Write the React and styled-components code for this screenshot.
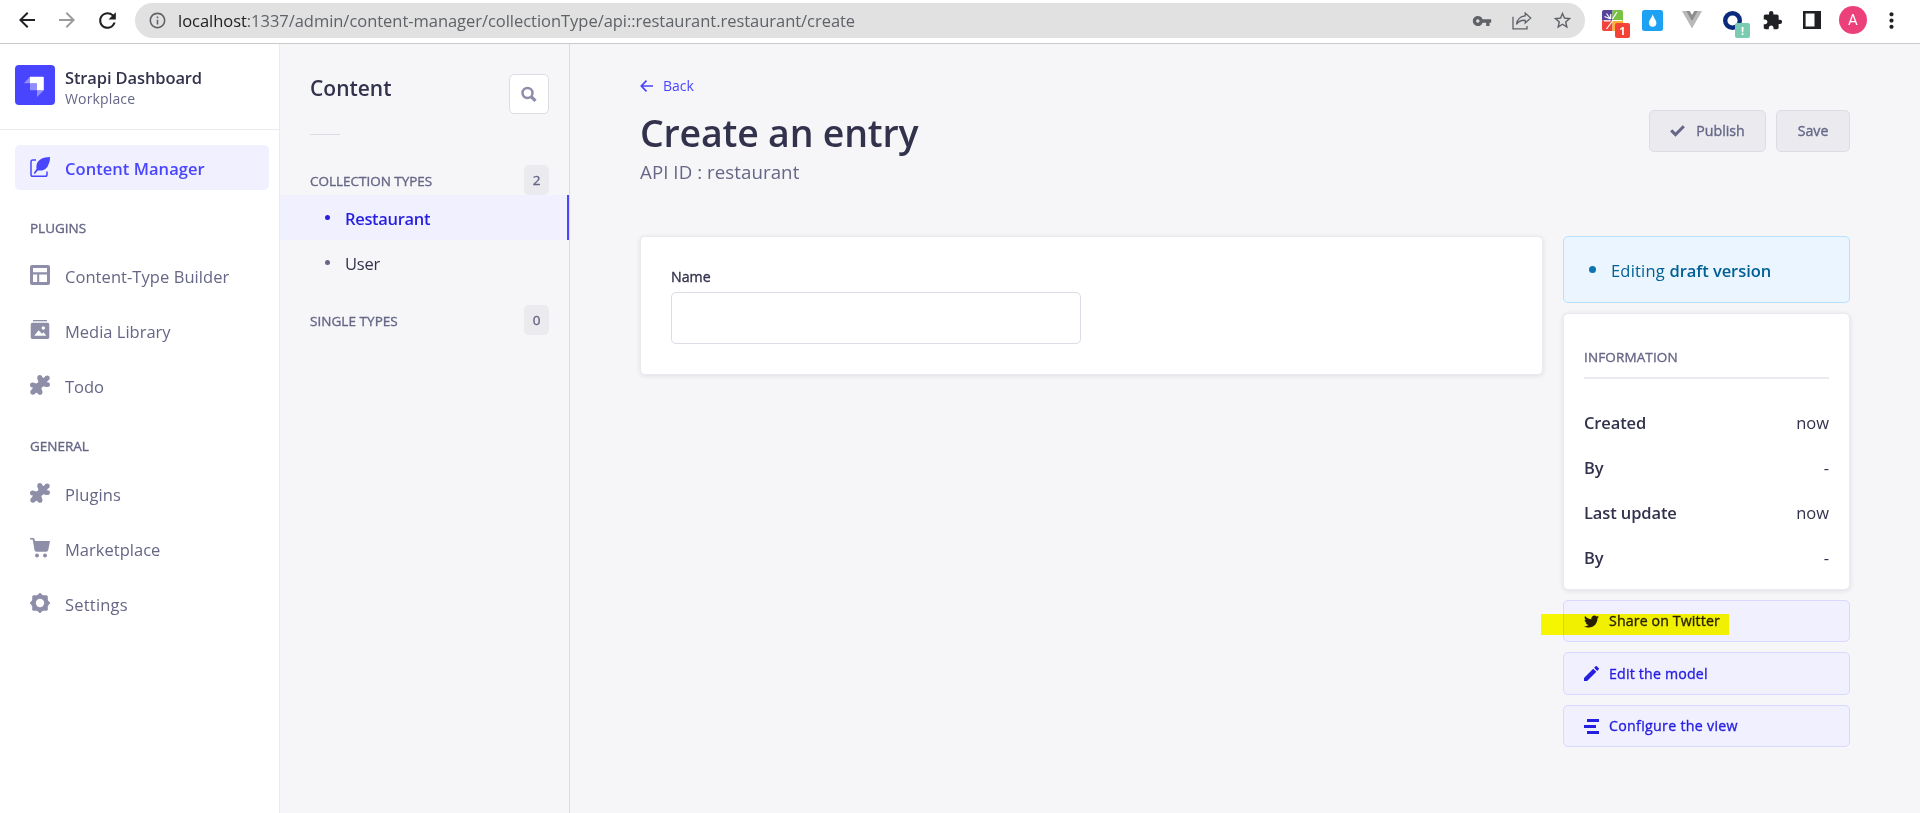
import React from 'react';
import styled, { createGlobalStyle, css } from 'styled-components';
import { MdArrowBack, MdArrowForward, MdRefresh, MdInfoOutline, MdVpnKey, MdStarBorder, MdExtension, MdMoreVert, MdEdit } from 'react-icons/md';
import { FaTwitter } from 'react-icons/fa';

const GlobalStyle = createGlobalStyle`
  * { box-sizing: border-box; }
  body {
    margin: 0;
    overflow: hidden;
    background: #f6f6f9;
    font-family: "Open Sans", "Noto Sans", sans-serif;
    color: #32324d;
  }
  h1, h2, p, ul { margin: 0; padding: 0; font-weight: inherit; list-style: none; }
  button { font-family: inherit; margin: 0; padding: 0; }
  svg { display: block; flex: none; }
`;

/* ---------- shared text ---------- */
const Text = styled.span`
  display: block;
  white-space: nowrap;
  font-size: ${(p) => p.$size || 16.5}px;
  line-height: ${(p) => p.$line || 24}px;
  font-weight: ${(p) => p.$weight || 400};
  letter-spacing: ${(p) => p.$track || 0}px;
  color: ${(p) => p.$color || 'inherit'};
`;
/* A weight between regular and semibold, for small labels. */
const MediumText = styled(Text)`
  -webkit-text-stroke: 0.35px currentColor;
`;
const Caption = styled(MediumText).attrs((p) => ({ $size: 13.5, $track: p.$track ?? -0.02 }))``;

/* ---------- browser toolbar ---------- */
const Screen = styled.div`
  width: 1920px;
  height: 813px;
  display: flex;
  flex-direction: column;
`;
const Toolbar = styled.header`
  flex: none;
  height: 44px;
  display: flex;
  align-items: flex-start;
  background: #fff;
  border-bottom: 1px solid #c8cacb;
`;
const NavButtons = styled.div`
  width: 135px;
  height: 40px;
  padding-left: 15px;
  display: flex;
  align-items: center;
  gap: 16px;
`;
const AddressBar = styled.div`
  width: 1450px;
  height: 35px;
  margin-top: 3px;
  padding: 0 12px 0 13px;
  display: flex;
  align-items: center;
  border-radius: 18px;
  background: #e1e1e1;
  color: #5f6368;
`;
const Url = styled(Text)`
  flex: 1;
  padding-left: 11px;
  color: #5f6368;
  b { font-weight: 400; color: #202124; }
`;
const AddressActions = styled.div`
  display: flex;
  align-items: center;
  gap: 20px;
`;
const Extensions = styled.div`
  height: 40px;
  padding-left: 17px;
  display: flex;
  align-items: center;
`;
const Extension = styled.div`
  position: relative;
  width: 40px;
  height: 40px;
  flex: none;
  display: flex;
  align-items: center;
  padding-left: ${(p) => p.$inset || 0}px;
`;
const ExtensionBadge = styled.span`
  position: absolute;
  left: 13px;
  top: 23px;
  width: 15px;
  height: 15px;
  border-radius: 2px;
  background: ${(p) => p.$bg};
  color: #fff;
  font: 700 11px/16px "Open Sans", sans-serif;
  text-align: center;
`;
const Avatar = styled.div`
  width: 28px;
  height: 28px;
  flex: none;
  margin: 0 12px 0 -3px;
  border-radius: 50%;
  background: #ec407a;
  color: #fff;
  font: 400 15px/29px Roboto, sans-serif;
  text-align: center;
`;

/* ---------- layout ---------- */
const Body = styled.div`
  flex: 1;
  min-height: 0;
  display: flex;
`;
const Sidebar = styled.nav`
  width: 280px;
  flex: none;
  background: #fff;
  border-right: 1px solid #eaeaef;
`;
const Brand = styled.div`
  height: 86px;
  padding: 21px 15px 0;
  display: flex;
  gap: 10px;
  border-bottom: 1px solid #eaeaef;
`;
const BrandLogo = styled.div`
  width: 40px;
  height: 40px;
  border-radius: 4px;
  background: #4945ff;
`;
const BrandText = styled.div`
  flex: 1;
`;
const NavList = styled.ul`
  padding: 0 10px 0 15px;
  margin-top: ${(p) => p.$top}px;
  display: flex;
  flex-direction: column;
  gap: 10px;
`;
const NavItem = styled.li`
  height: 45px;
  padding-left: 15px;
  display: flex;
  align-items: flex-start;
  gap: 15px;
  border-radius: 5px;
  color: #666687;
  svg { margin-top: 12px; color: #8e8ea9; }
  ${Text} { margin-top: 12px; }
  ${(p) => p.$active && css`
    background: #f0f0ff;
    color: #4945ff;
    svg { color: #4945ff; }
  `}
`;
const GroupCaption = styled(Caption)`
  color: #666687;
  padding-left: 30px;
  margin-top: 28px;
`;

/* ---------- content column ---------- */
const SubNav = styled.nav`
  width: 290px;
  flex: none;
  border-right: 1px solid #dcdce4;
`;
const SubNavHeader = styled.div`
  height: 90px;
  padding: 30px 20px 0 30px;
  display: flex;
  justify-content: space-between;
`;
const SearchButton = styled.button`
  width: 40px;
  height: 40px;
  display: flex;
  align-items: center;
  justify-content: center;
  background: #fff;
  border: 1px solid #dcdce4;
  border-radius: 5px;
  color: #8e8ea9;
`;
const ShortRule = styled.div`
  width: 30px;
  height: 1px;
  margin: 0 0 30px 30px;
  background: #dcdce4;
`;
const TypeHeader = styled.div`
  height: 30px;
  margin-top: ${(p) => p.$top || 0}px;
  padding: 0 20px 0 30px;
  display: flex;
  align-items: flex-end;
  justify-content: space-between;
  color: #666687;
`;
const Count = styled.span`
  width: 25px;
  height: 30px;
  border-radius: 5px;
  background: #eaeaef;
  text-align: center;
  font-size: 13.5px;
  -webkit-text-stroke: 0.35px currentColor;
  line-height: 30px;
`;
const TypeRow = styled.div`
  height: 45px;
  padding: 0 0 0 45px;
  display: flex;
  align-items: center;
  gap: 15px;
  color: #32324d;
  ${Text} { padding-top: 2px; }
  ${(p) => p.$active && css`
    background: #f0f0ff;
    border-right: 2px solid #4945ff;
    color: #271fe0;
  `}
`;
const Dot = styled.i`
  width: ${(p) => p.$size}px;
  height: ${(p) => p.$size}px;
  margin-bottom: ${(p) => p.$lift || 0}px;
  border-radius: 50%;
  background: ${(p) => p.$color};
`;

/* ---------- main ---------- */
const Main = styled.main`
  flex: 1;
  padding: 30px 70px 0;
`;
const BackLink = styled.div`
  height: 24px;
  display: flex;
  align-items: center;
  gap: 10px;
  color: #4945ff;
`;
const TitleRow = styled.div`
  height: 138px;
  display: flex;
  justify-content: space-between;
`;
const TitleBlock = styled.div`
  padding-top: 10px;
`;
const Actions = styled.div`
  display: flex;
  gap: 10px;
  padding-top: 12px;
`;
const ActionButton = styled.button`
  width: ${(p) => p.$width}px;
  height: 42px;
  display: flex;
  align-items: center;
  justify-content: center;
  gap: 11px;
  border: 1px solid #dcdce4;
  border-radius: 5px;
  background: #eaeaef;
  color: #666687;
`;
const Columns = styled.div`
  display: flex;
  align-items: flex-start;
  justify-content: space-between;
`;
const Card = styled.section`
  width: ${(p) => p.$width}px;
  height: ${(p) => p.$height}px;
  padding: ${(p) => p.$pad};
  background: #fff;
  border: 1px solid #eaeaef;
  border-radius: 5px;
  box-shadow: 0 1px 5px rgba(33, 33, 52, 0.1);
`;
const Field = styled.input`
  display: block;
  width: 410px;
  height: 52px;
  margin-top: 3px;
  border: 1px solid #dcdce4;
  border-radius: 5px;
  background: #fff;
  outline: none;
`;
const Aside = styled.aside`
  width: 287px;
  display: flex;
  flex-direction: column;
  gap: 10px;
`;
const Status = styled.div`
  height: 67px;
  padding: 1px 0 0 25px;
  display: flex;
  align-items: center;
  gap: 15px;
  border: 1px solid #b8e1ff;
  border-radius: 5px;
  background: #eaf5ff;
  color: #006096;
  ${Text} { padding-top: 2px; }
  b { font-weight: 600; letter-spacing: -0.05px; }
`;
const InfoRule = styled.hr`
  height: 2px;
  margin: 9px 0 21px;
  border: 0;
  background: #eaeaef;
`;
const InfoRow = styled.div`
  height: 45px;
  display: flex;
  justify-content: space-between;
  align-items: center;
`;
const SideLinks = styled.div`
  display: flex;
  flex-direction: column;
  gap: 10px;
`;
const SideLink = styled.div`
  position: relative;
  height: ${(p) => p.$height || 42}px;
  padding-left: 20px;
  display: flex;
  align-items: center;
  gap: 10px;
  border: 1px solid #d9d8ff;
  border-radius: 5px;
  background: #f0f0ff;
  color: #271fe0;
`;
const Marker = styled.div`
  position: absolute;
  left: -23px;
  top: 13px;
  width: 188px;
  height: 21px;
  background: #ffff00;
  mix-blend-mode: multiply;
`;

/* ---------- icons ---------- */
const Icon20 = ({ children }) => (
  <svg width="20" height="20" viewBox="0 0 20 20" fill="currentColor">{children}</svg>
);
const FeatherIcon = () => (
  <Icon20>
    <path d="M6 3.100H2.700Q1 3.100 1 4.800V17.400Q1 19.200 2.700 19.200H15.200Q17 19.200 17 17.400V14.500" fill="none" stroke="currentColor" strokeWidth="1.500" />
    <path d="M20 0C12.800.1 8.800 2.600 7 6.400c-.8 2-.7 3.800-.4 5.400L3.700 16.200l1.200.8 2.900-3.500c3.300.4 6-.4 7.900-1.800 1.400-1.100 2.100-2.300 2.600-3.900C19.600 5.600 20 3 20 0Z" />
  </Icon20>
);
const LayoutIcon = () => (
  <Icon20><path fillRule="evenodd" d="M2 0h16a2 2 0 0 1 2 2v16a2 2 0 0 1-2 2H2a2 2 0 0 1-2-2V2a2 2 0 0 1 2-2ZM3 3V7.300H17V3H3ZM3 9.500V17H7.200V9.500H3Zm6.200 0V17H17V9.500H9.200Z" /></Icon20>
);
const MediaIcon = () => (
  <Icon20>
    <path d="M3 0h14v1.300H3z" />
    <path fillRule="evenodd" d="M2.500 2.800h15a1.800 1.800 0 0 1 1.800 1.800v12.600a1.800 1.800 0 0 1-1.800 1.800h-15a1.800 1.800 0 0 1-1.800-1.800V4.600a1.800 1.800 0 0 1 1.800-1.800ZM4.300 15.700h12L13.600 12.200 12 13.700 8.600 10.200ZM13.300 6.300a1.700 1.700 0 1 0 0 3.400 1.700 1.700 0 0 0 0-3.400Z" />
  </Icon20>
);
const PuzzleIcon = () => (
  <Icon20>
    <circle cx="9.800" cy="2.500" r="2.500" /><circle cx="17.200" cy="2.900" r="2.500" /><circle cx="17.600" cy="9.700" r="2.400" />
    <circle cx="2.500" cy="10" r="2.500" /><circle cx="2.900" cy="17.100" r="2.600" /><circle cx="10" cy="17.500" r="2.400" />
    <path d="M3 7.700 6.500 8.600 8.500 7 7.300 3.500 10 1 13.600 3 16 1 18.500 4.800 16.900 7 18.800 11 16 12 13.500 11.300 11.300 13 12.500 17 9.500 19.200 6.300 17.700 3 19.200 1.200 15.600 3 12.500 1.500 9Z" />
  </Icon20>
);
const CartIcon = () => (
  <Icon20>
    <path d="M0 0h3.300q.9 0 1.100.8L5 3h15l-1.700 8.800q-.3 1.900-2.200 1.900H6.500q-1.700 0-2-1.700L2.700 1.600H0Z" />
    <circle cx="7" cy="17.500" r="2" /><circle cx="15" cy="17.500" r="2" />
  </Icon20>
);
const CogIcon = () => (
  <svg width="20" height="20" viewBox="0 0 20 20">
    <mask id="cog"><rect width="20" height="20" fill="#fff" /><circle cx="10" cy="10" r="4.200" fill="#000" /></mask>
    <g mask="url(#cog)" fill="currentColor">
      <rect x="2.200" y="2.200" width="15.600" height="15.600" rx="1.500" />
      <rect x="2.600" y="2.600" width="14.800" height="14.800" rx="1" transform="rotate(45 10 10)" />
    </g>
  </svg>
);
const StrapiMark = () => (
  <svg width="40" height="40" viewBox="0 0 40 40" fill="#fff">
    <path d="M15 11.700h13.100q.7 0 .7.700v12.900H22V19q0-.7-.7-.7H15Z" />
    <path opacity=".4" d="M15 11.700v6.600H8.900Z" />
    <path opacity=".4" d="M15 18.300h6.300q.7 0 .7.700v6.300h-6.300q-.7 0-.7-.7Z" />
    <path opacity=".4" d="M22 25.300h6.800L22 32Z" />
  </svg>
);
const SearchIcon = () => (
  <svg width="16" height="16" viewBox="0 0 16 16" fill="none" stroke="currentColor">
    <circle cx="6.500" cy="7" r="5" strokeWidth="2.500" /><path d="m10.200 10.700 4.300 4.200" strokeWidth="3.200" />
  </svg>
);
const CheckIcon = () => (
  <svg width="15" height="12" viewBox="0 0 15 12"><path d="M1.200 5.400 5.500 9.600 13.800 1.300" fill="none" stroke="currentColor" strokeWidth="3" /></svg>
);
const BackArrow = () => (
  <svg width="13" height="12" viewBox="0 0 13 12" fill="none" stroke="currentColor" strokeWidth="1.700"><path d="M13 6H1.500M6.500.7 1.300 6l5.200 5.300" /></svg>
);
const PencilIcon = () => (
  <svg width="15" height="15" viewBox="3 3 18 18" fill="currentColor"><MdEdit x="0" y="0" size={24} /></svg>
);
const LinesIcon = () => (
  <svg width="15" height="15" viewBox="0 0 15 15" fill="currentColor"><path d="M3 0h12v3H3zM0 6h12v3H0zM3 12h12v3H3z" /></svg>
);
const ShareIcon = () => (
  <svg width="20" height="18" viewBox="0 0 20 18" fill="none" stroke="currentColor" strokeWidth="1.300">
    <path d="M1 4.700V16.800H15V14" />
    <path d="M13.200 1 18.700 6 13.200 11V8.300C9.500 8 6.500 9.500 4.500 12.300 5.200 7.500 8 4.400 13.200 3.900Z" />
  </svg>
);
const GridLogo = () => (
  <svg width="21" height="21" viewBox="0 0 21 21">
    <path fill="#57439a" d="M2 0h8.500v10.500H0V2q0-2 2-2Z" /><path fill="#79c142" d="M10.500 0H19q2 0 2 2v8.500H10.500Z" />
    <path fill="#f0443e" d="M0 10.500h10.500V21H2q-2 0-2-2Z" /><path fill="#f9b233" d="M10.500 10.500H21V21H10.500Z" />
    <path stroke="#fff" strokeWidth="1.200" fill="none" d="M2.500 6.500 8.500 9M4.500 3.500 8.500 9M8.700 4v5M15 2l-4.500 7M2 10.800h6.500M10 10.500H20M10.500 11 4.500 19" />
  </svg>
);
const DropLogo = () => (
  <svg width="21" height="21" viewBox="0 0 21 21"><rect width="21" height="21" rx="2.500" fill="#1da1f2" /><path fill="#fff" d="M10.700 4C10.500 7 7 9.800 7 13a3.700 3.700 0 0 0 7.400 0c0-2.500-2.700-5-3.700-9Z" /></svg>
);
const VueLogo = () => (
  <svg width="20" height="18" viewBox="0 0 20 18"><path fill="#b9b9b9" d="M0 0h4l6 10.500L16 0h4L10 17.500Z" /><path fill="#8d8d8d" d="M4 0h3.700L10 4l2.300-4H16L10 10.500Z" /></svg>
);
const RingLogo = () => (
  <svg width="19" height="19" viewBox="0 0 19 19"><circle cx="9.500" cy="9.500" r="7.300" fill="none" stroke="#0a2a7c" strokeWidth="4.400" /></svg>
);
const PanelIcon = () => (
  <svg width="18" height="18" viewBox="0 0 18 18"><path fill="#202124" fillRule="evenodd" d="M0 0h18v18H0ZM2.600 2.600v12.800h8.900V2.600Z" /></svg>
);

/* ---------- data ---------- */
const plugins = [
  { label: 'Content-Type Builder', Icon: LayoutIcon, track: 0.06 },
  { label: 'Media Library', Icon: MediaIcon, track: 0 },
  { label: 'Todo', Icon: PuzzleIcon, track: 0 },
];
const general = [
  { label: 'Plugins', Icon: PuzzleIcon, track: 0.1 },
  { label: 'Marketplace', Icon: CartIcon, track: 0.02 },
  { label: 'Settings', Icon: CogIcon, track: 0.2 },
];
const info = [
  ['Created', 'now'],
  ['By', '-'],
  ['Last update', 'now'],
  ['By', '-'],
];

const NavGroup = ({ items, top }) => (
  <NavList $top={top}>
    {items.map(({ label, Icon, track }) => (
      <NavItem key={label}><Icon /><Text $track={track}>{label}</Text></NavItem>
    ))}
  </NavList>
);

export default function App() {
  return (
    <Screen>
      <GlobalStyle />
      <Toolbar>
        <NavButtons>
          <MdArrowBack size={24} color="#202124" />
          <MdArrowForward size={24} color="#9a9b9d" />
          <MdRefresh size={25} color="#202124" />
        </NavButtons>
        <AddressBar>
          <MdInfoOutline size={19} />
          <Url $track={-0.035}><b>localhost</b>:1337/admin/content-manager/collectionType/api::restaurant.restaurant/create</Url>
          <AddressActions>
            <MdVpnKey size={20} />
            <ShareIcon />
            <MdStarBorder size={21} />
          </AddressActions>
        </AddressBar>
        <Extensions>
          <Extension><GridLogo /><ExtensionBadge $bg="#f44336">1</ExtensionBadge></Extension>
          <Extension><DropLogo /></Extension>
          <Extension><VueLogo /></Extension>
          <Extension $inset={1}><RingLogo /><ExtensionBadge $bg="#7bcbb3">!</ExtensionBadge></Extension>
          <Extension><MdExtension size={21} color="#202124" /></Extension>
          <Extension $inset={1}><PanelIcon /></Extension>
          <Avatar>A</Avatar>
          <MdMoreVert size={25} color="#202124" />
        </Extensions>
      </Toolbar>
      <Body>
        <Sidebar>
          <Brand>
            <BrandLogo><StrapiMark /></BrandLogo>
            <BrandText>
              <Text $weight={600} $line={25} $track={-0.12}>Strapi Dashboard</Text>
              <Text $size={14} $line={18} $track={0.15} $color="#666687">Workplace</Text>
            </BrandText>
          </Brand>
          <NavList $top={15}>
            <NavItem $active><FeatherIcon /><Text $weight={600} $track={0.05}>Content Manager</Text></NavItem>
          </NavList>
          <GroupCaption $line={20}>PLUGINS</GroupCaption>
          <NavGroup items={plugins} top={15} />
          <GroupCaption $line={20}>GENERAL</GroupCaption>
          <NavGroup items={general} top={15} />
        </Sidebar>
        <SubNav>
          <SubNavHeader>
            <Text as="h2" $size={21} $weight={600} $line={28}>Content</Text>
            <SearchButton><SearchIcon /></SearchButton>
          </SubNavHeader>
          <ShortRule />
          <TypeHeader><Caption $line={27}>COLLECTION TYPES</Caption><Count>2</Count></TypeHeader>
          <TypeRow $active><Dot $size={5} $color="#271fe0" /><Text $weight={600} $track={-0.32}>Restaurant</Text></TypeRow>
          <TypeRow><Dot $size={5} $color="#666687" /><Text $track={-0.2}>User</Text></TypeRow>
          <TypeHeader $top={20}><Caption $line={27} $track={0.05}>SINGLE TYPES</Caption><Count>0</Count></TypeHeader>
        </SubNav>
        <Main>
          <BackLink><BackArrow /><Text $size={14}>Back</Text></BackLink>
          <TitleRow>
            <TitleBlock>
              <Text as="h1" $size={37.5} $weight={600} $line={50} $track={-0.2}>Create an entry</Text>
              <Text as="p" $size={18.7} $line={27} $track={0.06} $color="#666687">API ID : restaurant</Text>
            </TitleBlock>
            <Actions>
              <ActionButton $width={117}><CheckIcon /><MediumText $size={14.2}>Publish</MediumText></ActionButton>
              <ActionButton $width={74}><MediumText $size={14.2}>Save</MediumText></ActionButton>
            </Actions>
          </TitleRow>
          <Columns>
            <Card $width={903} $height={139} $pad="28px 30px">
              <MediumText $size={14.2}>Name</MediumText>
              <Field />
            </Card>
            <Aside>
              <Status><Dot $size={7} $lift={2} $color="#0c75af" /><Text $track={0.2}>Editing <b>draft version</b></Text></Status>
              <Card $width={287} $height={277} $pad="32px 20px 0">
                <Caption $line={22} $color="#666687" $track={0.13}>INFORMATION</Caption>
                <InfoRule />
                {info.map(([k, v], i) => (
                  <InfoRow key={i}><Text $weight={600} $track={-0.12}>{k}</Text><Text>{v}</Text></InfoRow>
                ))}
              </Card>
              <SideLinks>
                <SideLink>
                  <FaTwitter size={15} /><MediumText $size={14.2} $track={0.12}>Share on Twitter</MediumText><Marker />
                </SideLink>
                <SideLink $height={43}><PencilIcon /><MediumText $size={14.2} $track={0.18}>Edit the model</MediumText></SideLink>
                <SideLink><LinesIcon /><MediumText $size={14.2} $track={0.3}>Configure the view</MediumText></SideLink>
              </SideLinks>
            </Aside>
          </Columns>
        </Main>
      </Body>
    </Screen>
  );
}
